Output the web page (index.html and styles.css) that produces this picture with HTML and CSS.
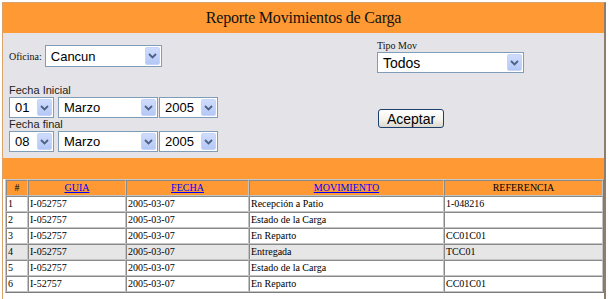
FILE: index.html
```html
<!DOCTYPE html>
<html lang="es">
<head>
    <meta charset="UTF-8">
    <meta name="viewport" content="width=device-width, initial-scale=1.0">
    <title>Reporte Movimientos de Carga</title>

    <link rel="stylesheet" href="styles.css">
</head>
<body>
    <div class="frame">
        <div class="title">Reporte Movimientos de Carga</div>

        <form class="filters" action="">
            <div class="colLeft">
                <div class="oficina">
                    <span class="lblSerif">Oficina:</span>
                    <div class="sel selOficina"><span>Cancun</span><i class="arr"><svg width="9" height="6" viewBox="0 0 9 6"><path d="M1 1 L4.5 4.5 L8 1" fill="none" stroke="#4d6185" stroke-width="1.8"/></svg></i></div>
                </div>

                <div class="lblSans first">Fecha Inicial</div>
                <div class="dateRow">
                    <div class="sel selDia"><span>01</span><i class="arr"><svg width="9" height="6" viewBox="0 0 9 6"><path d="M1 1 L4.5 4.5 L8 1" fill="none" stroke="#4d6185" stroke-width="1.8"/></svg></i></div>
                    <div class="sel selMes"><span>Marzo</span><i class="arr"><svg width="9" height="6" viewBox="0 0 9 6"><path d="M1 1 L4.5 4.5 L8 1" fill="none" stroke="#4d6185" stroke-width="1.8"/></svg></i></div>
                    <div class="sel selAnio"><span>2005</span><i class="arr"><svg width="9" height="6" viewBox="0 0 9 6"><path d="M1 1 L4.5 4.5 L8 1" fill="none" stroke="#4d6185" stroke-width="1.8"/></svg></i></div>
                </div>

                <div class="lblSans">Fecha final</div>
                <div class="dateRow">
                    <div class="sel selDia"><span>08</span><i class="arr"><svg width="9" height="6" viewBox="0 0 9 6"><path d="M1 1 L4.5 4.5 L8 1" fill="none" stroke="#4d6185" stroke-width="1.8"/></svg></i></div>
                    <div class="sel selMes"><span>Marzo</span><i class="arr"><svg width="9" height="6" viewBox="0 0 9 6"><path d="M1 1 L4.5 4.5 L8 1" fill="none" stroke="#4d6185" stroke-width="1.8"/></svg></i></div>
                    <div class="sel selAnio"><span>2005</span><i class="arr"><svg width="9" height="6" viewBox="0 0 9 6"><path d="M1 1 L4.5 4.5 L8 1" fill="none" stroke="#4d6185" stroke-width="1.8"/></svg></i></div>
                </div>
            </div>

            <div class="colRight">
                <div class="lblSerif tipo">Tipo Mov</div>
                <div class="sel selTipo"><span>Todos</span><i class="arr"><svg width="9" height="6" viewBox="0 0 9 6"><path d="M1 1 L4.5 4.5 L8 1" fill="none" stroke="#4d6185" stroke-width="1.8"/></svg></i></div>
                <button type="button" class="btn">Aceptar</button>
            </div>
        </form>

        <div class="band"></div>

        <table class="grid">
            <thead>
                <tr>
                    <th class="cNum">#</th>
                    <th class="cGuia"><a href="#">GUIA</a></th>
                    <th class="cFecha"><a href="#">FECHA</a></th>
                    <th class="cMov"><a href="#">MOVIMIENTO</a></th>
                    <th class="cRef">REFERENCIA</th>
                </tr>
            </thead>
            <tbody>
                <tr><td>1</td><td>I-052757</td><td>2005-03-07</td><td>Recepción a Patio</td><td>1-048216</td></tr>
                <tr><td>2</td><td>I-052757</td><td>2005-03-07</td><td>Estado de la Carga</td><td></td></tr>
                <tr><td>3</td><td>I-052757</td><td>2005-03-07</td><td>En Reparto</td><td>CC01C01</td></tr>
                <tr class="alt"><td>4</td><td>I-052757</td><td>2005-03-07</td><td>Entregada</td><td>TCC01</td></tr>
                <tr><td>5</td><td>I-052757</td><td>2005-03-07</td><td>Estado de la Carga</td><td></td></tr>
                <tr><td>6</td><td>I-52757</td><td>2005-03-07</td><td>En Reparto</td><td>CC01C01</td></tr>
            </tbody>
        </table>
    </div>
</body>
</html>
```

FILE: styles.css
```css
body{
    margin: 2px 0 0 2px;
    background: #fff;
    overflow: hidden;
}
.frame{
    width: 604px;
    height: 297px;
    box-sizing: border-box;
    border-top: 1px solid #d9a36b;
    border-left: 1px solid #d9a36b;
    border-right: 2px solid #8f7c6a;
    background: #fff;
}
.title{
    height: 30px;
    line-height: 30px;
    background: #ff9933;
    text-align: center;
    font-family: "Liberation Serif", serif;
    font-size: 16px;
    letter-spacing: -0.2px;
    color: #111;
}

/* filtros */
.filters{
    margin: 0;
    height: 125px;
    background: #e4e4e8;
    display: flex;
}
.colLeft{
    width: 368px;
    padding-left: 6px;
}
.colRight{
    display: flex;
    flex-direction: column;
    align-items: flex-start;
}
.lblSerif{
    font-family: "Liberation Serif", serif;
    font-size: 10px;
    color: #111;
}
.lblSans{
    font-family: "Liberation Sans", sans-serif;
    font-size: 11px;
    line-height: 13px;
    color: #222;
}
.lblSans.first{
    margin-top: 17px;
}
.oficina{
    margin-top: 12px;
    display: flex;
    align-items: center;
    gap: 3px;
}
.dateRow{
    display: flex;
    height: 21px;
}
.tipo{
    margin-top: 7px;
    line-height: 11px;
    height: 12px;
}

/* selects estilo XP */
.sel{
    display: flex;
    align-items: center;
    justify-content: space-between;
    box-sizing: border-box;
    height: 21px;
    padding: 1px;
    border: 1px solid #7f9db9;
    background: #fff;
    font-family: "Liberation Sans", sans-serif;
    font-size: 13px;
    color: #000;
}
.sel span{
    padding-left: 4px;
}
.sel .arr{
    width: 15px;
    align-self: stretch;
    box-sizing: border-box;
    border: 1px solid #c6d5f7;
    border-radius: 2px;
    background: linear-gradient(#cfdcfc, #b4c8f6);
    display: flex;
    align-items: center;
    justify-content: center;
}
.selOficina{ width: 117px; height: 22px; }
.selDia{ width: 45px; margin-right: 4px; }
.selMes{ width: 100px; margin-right: 1px; }
.selAnio{ width: 59px; }
.selTipo{ width: 147px; font-size: 14px; }

.btn{
    margin-top: 36px;
    margin-left: 1px;
    width: 66px;
    height: 19px;
    padding: 0;
    border: 1px solid #1c3f6e;
    border-radius: 3px;
    background: linear-gradient(#ffffff, #f4f3ee 55%, #dcd8cd);
    font-family: "Liberation Sans", sans-serif;
    font-size: 14px;
    line-height: 16px;
    color: #000;
}

.band{
    height: 21px;
    background: #ff9933;
}

/* tabla */
.grid{
    margin-left: 2px;
    width: 599px;
    table-layout: fixed;
    border-collapse: separate;
    border-spacing: 0;
    border: 1px solid;
    border-color: #c8c8c8 #7c7c7c #7c7c7c #c8c8c8;
    font-family: "Liberation Serif", serif;
    font-size: 10px;
    color: #000;
}
.grid th, .grid td{
    box-sizing: border-box;
    height: 16px;
    padding: 1px 1px;
    line-height: 12px;
    border: 1px solid;
    border-color: #8a8a8a #c4c4c4 #c4c4c4 #8a8a8a;
    white-space: nowrap;
    overflow: hidden;
    text-align: left;
}
.grid th{
    background: #ff9933;
    font-weight: normal;
    text-align: center;
}
.grid th a{
    color: #0000ff;
    text-decoration: underline;
}
.grid td{
    background: #fff;
}
.grid tr.alt td{
    background: #e6e6e6;
}
.cNum{ width: 22px; }
.cGuia{ width: 98px; }
.cFecha{ width: 123px; }
.cMov{ width: 195px; }
.cRef{ width: 159px; }
```
